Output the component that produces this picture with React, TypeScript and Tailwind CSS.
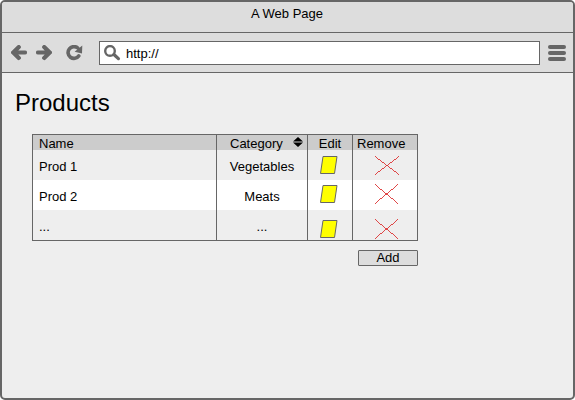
import type { ReactNode } from 'react';

function Cell({ children, className = '' }: { children: ReactNode; className?: string }) {
  return <div className={`border-l border-[#666] ${className}`}>{children}</div>;
}

function EditIcon() {
  return (
    <svg width="18" height="19" viewBox="0 0 18 19" className="block">
      <path d="M3 .5H17L14.5 17.5H.5Z" fill="#ff0" stroke="#666" />
    </svg>
  );
}

function RemoveIcon({ wide = false }: { wide?: boolean }) {
  return (
    <svg width="25" height="20" viewBox="0 0 25 20" className="block">
      <path d={wide ? 'M0 .5L24 18.5M0 18.5L24 .5' : 'M0 .5L23 19.5M0 19.5L23 .5'} stroke="#d33" fill="none" strokeWidth="0.9" shapeRendering="crispEdges" />
    </svg>
  );
}

const rows = [
  { name: 'Prod 1', category: 'Vegetables', bg: 'bg-[#eee]', edit: 'pt-[6px]', remove: 'pt-[6px]', wide: true },
  { name: 'Prod 2', category: 'Meats', bg: 'bg-white', edit: 'pt-[5px]', remove: 'pt-[4px]', wide: false },
  { name: '...', category: '...', bg: 'bg-[#eee]', edit: 'pt-[10px]', remove: 'pt-[9px]', wide: false },
];

export default function App() {
  return (
    <div className="h-[400px] w-[575px] overflow-hidden rounded-[5px] border-2 border-[#666] bg-[#eee] font-['Liberation_Sans',Arial,sans-serif] text-[13px] leading-[15px] text-black">
      <header className="h-[31px] border-b border-[#666] bg-[#ddd] pt-1 pr-px text-center">A Web Page</header>
      <nav className="flex h-10 border-b border-[#666] bg-[#ddd] pt-2 pl-[9px]">
        <svg width="16" height="16" viewBox="0 0 16 16" className="mt-1 block">
          <path d="M7.8 2.1L2.3 7.5L7.8 12.9M3 7.5H14" fill="none" stroke="#666" strokeWidth="4.2" strokeLinecap="round" />
        </svg>
        <svg width="16" height="16" viewBox="0 0 16 16" className="mt-1 ml-[9px] block">
          <path d="M8.2 2.1L13.7 7.5L8.2 12.9M13 7.5H2" fill="none" stroke="#666" strokeWidth="4.2" strokeLinecap="round" />
        </svg>
        <svg width="17" height="16" viewBox="0 0 17 16" className="mt-1 ml-[14px] block">
          <path d="M11.8 3A5.9 5.9 0 1 0 12.8 10.9" fill="none" stroke="#666" strokeWidth="3.6" strokeLinecap="round" />
          <path d="M16.3 .6L16 8.6L8.6 6.8Z" fill="#666" />
        </svg>
        <div className="ml-[16px] flex h-6 w-[441px] border border-[#666] bg-white">
          <svg width="17" height="17" viewBox="0 0 17 17" className="mt-[3px] ml-1 block">
            <circle cx="6" cy="5.9" r="4.8" fill="none" stroke="#666" strokeWidth="2.4" />
            <path d="M9.9 9.5L14.4 13.6" stroke="#666" strokeWidth="3.3" strokeLinecap="round" />
          </svg>
          <span className="mt-1 ml-[5px]">http://</span>
        </div>
        <div className="mt-1 ml-2 flex w-[18px] flex-col gap-[2px]">
          <span className="h-1 rounded-[2px] bg-[#666]" />
          <span className="h-1 rounded-[2px] bg-[#666]" />
          <span className="h-1 rounded-[2px] bg-[#666]" />
        </div>
      </nav>
      <main className="pt-4 pl-[13px]">
        <h1 className="h-[28px] text-[24px] leading-[28px]">Products</h1>
        <div className="mt-[17px] ml-[17px] w-[386px]">
          <div className="border border-[#666]">
            <div className="grid h-[15px] grid-cols-[183px_91px_45px_65px] bg-[#ccc]">
              <div className="pl-[6px] pt-px">Name</div>
              <Cell className="flex pl-[13px] pt-px">
                <span>Category</span>
                <svg width="10" height="10" viewBox="0 0 10 10" className="mt-px ml-[10px] block shrink-0">
                  <path d="M5 0L10 4.5H0ZM0 5.5H10L5 10Z" />
                </svg>
              </Cell>
              <Cell className="pt-px text-center">Edit</Cell>
              <Cell className="pl-1 pt-px">Remove</Cell>
            </div>
            {rows.map((row) => (
              <div key={row.name} className={`grid h-[30px] grid-cols-[183px_91px_45px_65px] ${row.bg}`}>
                <div className="pt-[9px] pl-[6px]">{row.name}</div>
                <Cell className="pt-[9px] text-center">{row.category}</Cell>
                <Cell className={`pl-3 ${row.edit}`}><EditIcon /></Cell>
                <Cell className={`pl-[22px] ${row.remove}`}><RemoveIcon wide={row.wide} /></Cell>
              </div>
            ))}
          </div>
          <button className="mt-[9px] ml-auto block h-4 w-[60px] rounded-[1px] border border-[#666] bg-[#ddd] text-center leading-[14px]">Add</button>
        </div>
      </main>
    </div>
  );
}
